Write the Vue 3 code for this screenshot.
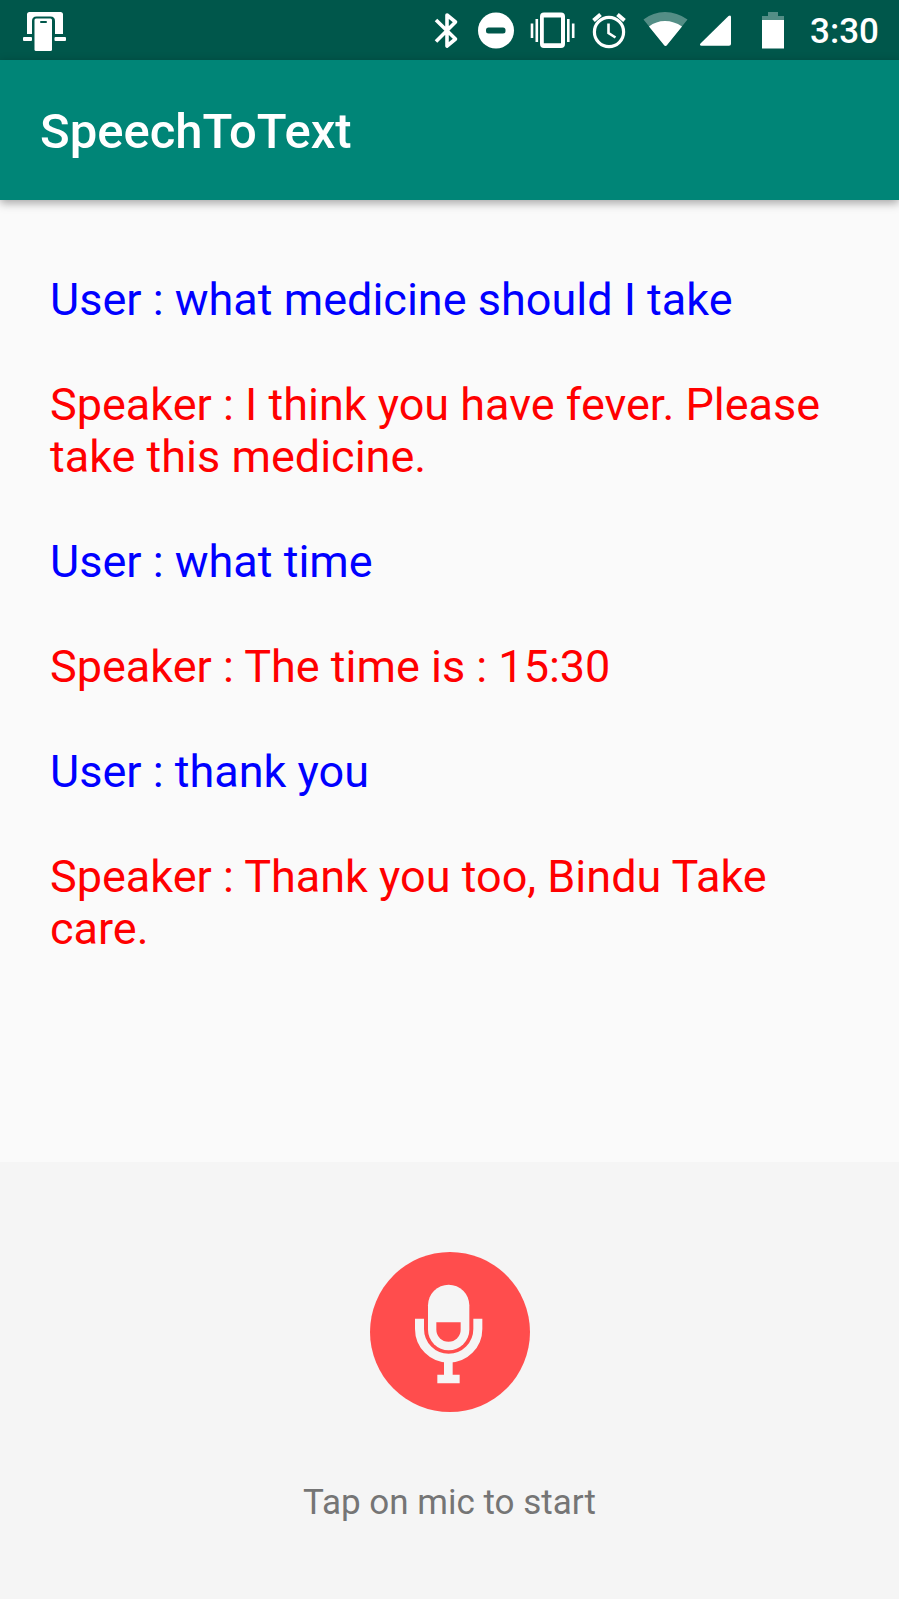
<script setup>
const messages = [
  { id: 1, who: 'User', text: 'what medicine should I take' },
  { id: 2, who: 'Speaker', text: 'I think you have fever. Please take this medicine.' },
  { id: 3, who: 'User', text: 'what time' },
  { id: 4, who: 'Speaker', text: 'The time is : 15:30' },
  { id: 5, who: 'User', text: 'thank you' },
  { id: 6, who: 'Speaker', text: 'Thank you too, Bindu Take care.' },
]
</script>

<template>
  <div class="screen">
    <div class="status">
      <svg class="icon" width="45" height="60" viewBox="22 0 45 60" aria-hidden="true">
        <path d="M27 34V14.500Q27 12 29.500 12H60.500Q63 12 63 14.500V34H55V21Q55 16.500 50.500 16.500H36.500Q32 16.500 32 21V34Z" fill="#fff" />
        <rect x="34.500" y="18.500" width="17.500" height="32.500" rx="1.500" fill="#fff" />
        <rect x="40" y="21" width="7" height="2" rx="1" fill="#00574b" />
        <rect x="23" y="37" width="9" height="4" rx="1" fill="#fff" />
        <rect x="54.500" y="37" width="11.500" height="4" rx="1" fill="#fff" />
      </svg>
      <div class="tray">
        <svg class="icon" width="32" height="60" viewBox="434 0 32 60" aria-hidden="true">
          <path d="M436 20L455.500 39L447 46V15L455.500 22L436 41.500" fill="none" stroke="#fff" stroke-width="3.600" stroke-linejoin="round" />
        </svg>
        <svg class="icon" width="40" height="60" viewBox="478 0 40 60" aria-hidden="true">
          <circle cx="496" cy="30.500" r="18" fill="#fff" />
          <rect x="486" y="27.500" width="19.500" height="6" rx="2.500" fill="#00574b" />
        </svg>
        <svg class="icon" width="49" height="60" viewBox="530 0 49 60" aria-hidden="true">
          <path fill-rule="evenodd" d="M544 12.500H561Q565 12.500 565 16.500V44Q565 48 561 48H544Q540 48 540 44V16.500Q540 12.500 544 12.500ZM543.800 17.500V43.300H561V17.500Z" fill="#fff" />
          <path d="M532 23.500V38M536.800 19V42M568.300 19V42M573.200 23.500V38" stroke="#fff" stroke-width="2.600" />
        </svg>
        <svg class="icon" width="40" height="60" viewBox="591 0 40 60" aria-hidden="true">
          <circle cx="609" cy="32" r="14.600" fill="none" stroke="#fff" stroke-width="3.200" />
          <path d="M593.500 20.500L600.500 14.500M624.500 20.500L617.500 14.500" stroke="#fff" stroke-width="4" />
          <path d="M608.500 23.500V33L615.500 37.500" fill="none" stroke="#fff" stroke-width="2.600" />
        </svg>
        <svg class="icon" width="45" height="60" viewBox="643 0 45 60" aria-hidden="true">
          <path d="M643.500 19.500Q653 12 665 12T687.500 19.500L667 45Q665.500 47 664 45Z" fill="#fff" fill-opacity=".33" />
          <path d="M649 26.500Q656 21 665 21T682 26.500L667 45Q665.500 47 664 45Z" fill="#fff" />
        </svg>
        <svg class="icon" width="50" height="60" viewBox="700 0 50 60" aria-hidden="true">
          <path d="M701.500 45.800Q699 45.500 700.500 43.500L728.500 16Q731 14.500 731 17V44Q731 45.800 729 45.800Z" fill="#fff" />
        </svg>
        <svg class="icon" width="36" height="60" viewBox="762 0 36 60" aria-hidden="true">
          <path d="M762 20V16H768V12H778V16H784V20Z" fill="#fff" fill-opacity=".33" />
          <rect x="762" y="20" width="22" height="28.500" fill="#fff" />
        </svg>
        <time class="clock">3:30</time>
      </div>
    </div>

    <header class="toolbar">
      <h1 class="title">SpeechToText</h1>
    </header>

    <main class="log">
      <p v-for="m in messages" :key="m.id" class="message" :class="m.who.toLowerCase()">{{ m.who }} : {{ m.text }}</p>
    </main>

    <footer class="panel">
      <button class="mic" type="button" aria-labelledby="mic-hint">
        <svg class="mic-art" viewBox="59 65 480 480" aria-hidden="true">
          <circle cx="299" cy="305" r="240" fill="#ff4d4d" />
          <rect x="233" y="163" width="124" height="197" rx="62" fill="#f5f5f5" />
          <path d="M258 276H331V298A36.500 36.500 0 0 1 258 298Z" fill="#ff4d4d" />
          <path d="M207.500 265V296A87.500 87.500 0 0 0 382.500 296V265" fill="none" stroke="#f5f5f5" stroke-width="27" />
          <path d="M281 385H307V433H328V459H261V433H281Z" fill="#f5f5f5" />
        </svg>
      </button>
      <p id="mic-hint" class="hint">Tap on mic to start</p>
    </footer>
  </div>
</template>

<style>
body {
  margin: 0;
}
</style>

<style scoped>
.screen {
  display: flex;
  flex-direction: column;
  min-height: 100vh;
  background: #fafafa;
  font-family: Roboto, "Noto Sans", sans-serif;
}
.status {
  display: flex;
  justify-content: space-between;
  height: 60px;
  padding: 0 20px 0 22px;
  background: #00574b;
}
.tray {
  display: flex;
  align-items: flex-start;
  gap: 12px;
}
.icon {
  display: block;
  flex: none;
}
.clock {
  color: #fff;
  font-size: 35px;
  font-weight: 500;
  line-height: 64px;
}
.toolbar {
  padding: 42px 40px 38px;
  background: #008577;
  box-shadow: 0 3px 9px rgba(0, 0, 0, 0.35);
}
.title {
  margin: 0;
  color: #fff;
  font-size: 49px;
  font-weight: 500;
  line-height: 60px;
}
.log {
  display: flex;
  flex: 1;
  flex-direction: column;
  gap: 53px;
  padding: 74px 50px;
}
.message {
  margin: 0;
  font-size: 45px;
  line-height: 52px;
}
.user {
  color: #00f;
}
.speaker {
  color: #f00;
}
.panel {
  display: flex;
  flex-direction: column;
  align-items: center;
  gap: 70px;
  padding: 90px 20px 75px;
  background: #f5f5f5;
}
.mic {
  width: 160px;
  height: 160px;
  padding: 0;
  border: 0;
  border-radius: 50%;
  background: none;
  cursor: pointer;
}
.mic-art {
  display: block;
  width: 100%;
}
.hint {
  margin: 0;
  color: #757575;
  font-size: 35px;
  line-height: 42px;
}
</style>
